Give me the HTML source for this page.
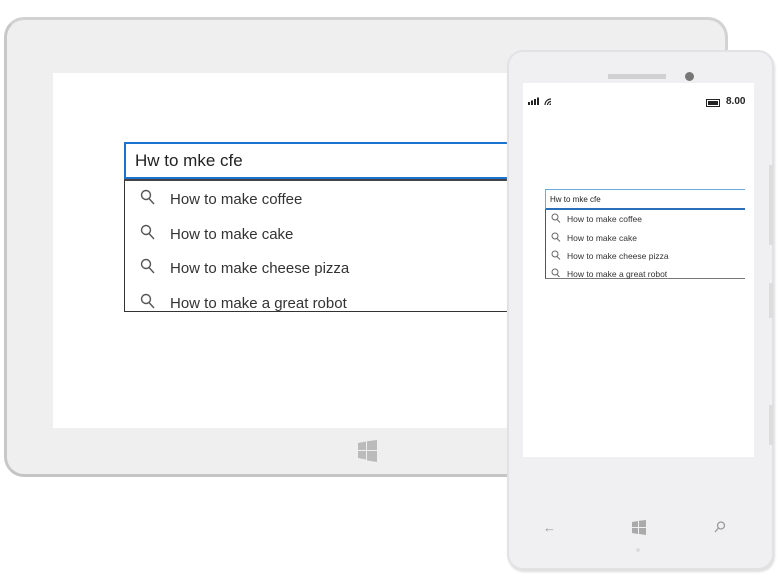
<!DOCTYPE html>
<html><head><style>
body{margin:0;width:781px;height:579px;background:#fff;position:relative;overflow:hidden;font-family:"Liberation Sans",sans-serif;}
.a{position:absolute;}
.tab{left:4px;top:17px;width:724px;height:460px;background:#efefef;border-radius:20px;border:3px solid #d2d2d2;border-bottom-color:#c4c4c4;border-left-color:#c8c8c8;box-sizing:border-box;}
.tscr{left:53px;top:73px;width:460px;height:355px;background:#fff;}
.phone{left:507px;top:50px;width:267px;height:520px;background:#f0f0f2;border-radius:16px;border:2px solid #e2e2e4;box-sizing:border-box;box-shadow:1px 2px 2px #ddd;}
.pscr{left:523px;top:83px;width:231px;height:374px;background:#fff;}
.it{position:absolute;color:#333;}
</style></head><body>
<div class="a tab"></div>
<div class="a tscr"></div>
<div class="a" style="left:124px;top:142px;width:384px;height:37px;border:2px solid #1a73d0;border-right:none;box-sizing:border-box;"></div>
<div class="a" style="left:124px;top:179px;width:384px;height:133px;border-left:1px solid #333;border-bottom:1px solid #333;box-sizing:border-box;"></div>
<div class="a" style="left:124px;top:179px;width:384px;height:2px;background:#444;"></div>
<div class="a" style="left:135px;top:151px;font-size:17px;color:#222;">Hw to mke cfe</div>
<div class="it" style="left:170px;top:191px;font-size:15px;">How to make coffee</div>
<div class="it" style="left:170px;top:226px;font-size:15px;">How to make cake</div>
<div class="it" style="left:170px;top:260px;font-size:15px;">How to make cheese pizza</div>
<div class="it" style="left:170px;top:295px;font-size:15px;">How to make a great robot</div>
<svg class="a" style="left:139px;top:189px" width="20" height="124" fill="none" stroke="#555" stroke-width="1.4">
<g><circle cx="7" cy="6" r="4.5"/><path d="M10 9.5l5 5.5"/></g>
<g transform="translate(0,35)"><circle cx="7" cy="6" r="4.5"/><path d="M10 9.5l5 5.5"/></g>
<g transform="translate(0,69)"><circle cx="7" cy="6" r="4.5"/><path d="M10 9.5l5 5.5"/></g>
<g transform="translate(0,104)"><circle cx="7" cy="6" r="4.5"/><path d="M10 9.5l5 5.5"/></g>
</svg>
<svg class="a" style="left:358px;top:440px" width="20" height="22" fill="#bbb"><path d="M0 3l8-1.5v8.5H0zM9 1.3L19 0v10H9zM0 11h8v8.5L0 18zM9 11h10v11L9 20.5z"/></svg>

<div class="a phone"></div>
<div class="a" style="left:608px;top:74px;width:58px;height:5px;background:#d0d0d0;"></div>
<div class="a" style="left:685px;top:72px;width:9px;height:9px;border-radius:50%;background:#777;"></div>
<div class="a" style="left:769px;top:165px;width:4px;height:80px;background:#ddd;"></div>
<div class="a" style="left:769px;top:283px;width:4px;height:35px;background:#ddd;"></div>
<div class="a" style="left:769px;top:405px;width:4px;height:40px;background:#ddd;"></div>
<div class="a pscr"></div>
<svg class="a" style="left:528px;top:97px" width="26" height="10" fill="#222"><rect x="0" y="5" width="2" height="3"/><rect x="3" y="3.5" width="2" height="4.5"/><rect x="6" y="2" width="2" height="6"/><rect x="9" y="0.5" width="2" height="7.5"/><path d="M17 8a6 6 0 0 1 6-6M19.5 8a3.5 3.5 0 0 1 3.5-3.5M22 8a1 1 0 0 1 1-1" fill="none" stroke="#222" stroke-width="1.2"/></svg>
<div class="a" style="left:706px;top:99px;width:12px;height:6px;border:1.5px solid #222;background:#222;box-shadow:inset 0 0 0 1px #fff;"></div>
<div class="a" style="left:726px;top:96px;font-size:10px;font-weight:bold;color:#222;">8.00</div>
<div class="a" style="left:545px;top:189px;width:200px;height:21px;border:1px solid #6aa8e0;border-right:none;border-bottom:2px solid #2a6fb8;box-sizing:border-box;"></div>
<div class="a" style="left:545px;top:210px;width:200px;height:69px;border-left:1px solid #555;border-bottom:1px solid #777;box-sizing:border-box;"></div>
<div class="a" style="left:550px;top:195px;font-size:8px;color:#222;">Hw to mke cfe</div>
<div class="it" style="left:567px;top:214px;font-size:8.5px;">How to make coffee</div>
<div class="it" style="left:567px;top:233px;font-size:8.5px;">How to make cake</div>
<div class="it" style="left:567px;top:251px;font-size:8.5px;">How to make cheese pizza</div>
<div class="it" style="left:567px;top:269px;font-size:8.5px;">How to make a great robot</div>
<svg class="a" style="left:551px;top:213px" width="12" height="64" fill="none" stroke="#666" stroke-width="1">
<g><circle cx="4" cy="4" r="3"/><path d="M6 6.5l3 3"/></g>
<g transform="translate(0,19)"><circle cx="4" cy="4" r="3"/><path d="M6 6.5l3 3"/></g>
<g transform="translate(0,37)"><circle cx="4" cy="4" r="3"/><path d="M6 6.5l3 3"/></g>
<g transform="translate(0,55)"><circle cx="4" cy="4" r="3"/><path d="M6 6.5l3 3"/></g>
</svg>
<div class="a" style="left:543px;top:520px;font-size:13px;color:#999;">←</div>
<svg class="a" style="left:632px;top:520px" width="14" height="15" fill="#aaa"><path d="M0 2l6-1v6H0zM7 .8L14 0v7H7zM0 8h6v6L0 13zM7 8h7v7L7 14z"/></svg>
<svg class="a" style="left:714px;top:521px" width="12" height="12" fill="none" stroke="#999" stroke-width="1.3"><circle cx="7" cy="4.5" r="3.5"/><path d="M4.5 7L1 11"/></svg>
<div class="a" style="left:636px;top:548px;width:4px;height:4px;border-radius:50%;background:#ddd;"></div>
</body></html>
